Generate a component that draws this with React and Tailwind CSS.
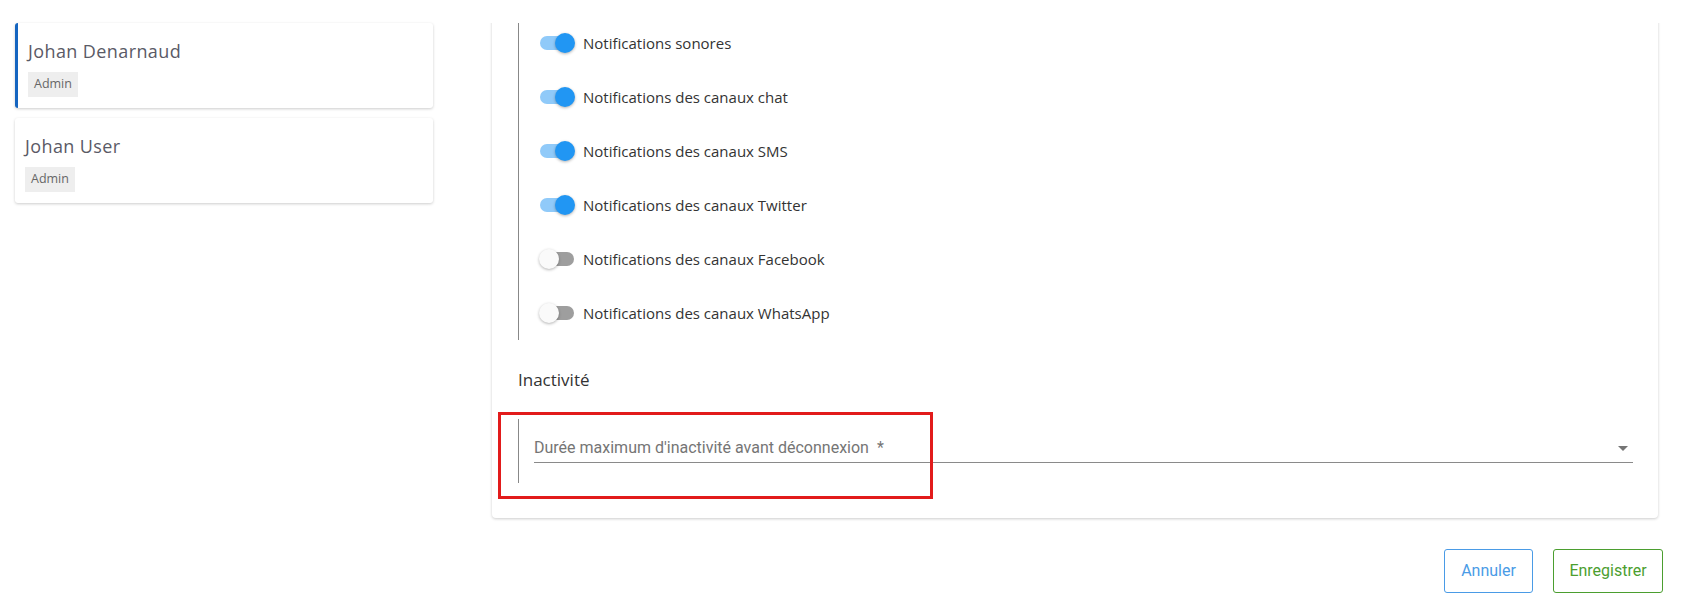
import { useState } from 'react';

const users = [
  { name: 'Johan Denarnaud', role: 'Admin', active: true },
  { name: 'Johan User', role: 'Admin', active: false },
];

const notifs = [
  { label: 'Notifications sonores', on: true },
  { label: 'Notifications des canaux chat', on: true },
  { label: 'Notifications des canaux SMS', on: true },
  { label: 'Notifications des canaux Twitter', on: true },
  { label: 'Notifications des canaux Facebook', on: false },
  { label: 'Notifications des canaux WhatsApp', on: false },
];

function Toggle({ on, onClick }) {
  return (
    <button onClick={onClick} className="relative w-[36px] h-[20px] flex items-center shrink-0">
      <span className={`w-[34px] h-[14px] rounded-full ml-[1px] ${on ? 'bg-[#90caf9]' : 'bg-[#9e9e9e]'}`}></span>
      <span
        className={`absolute top-0 w-[20px] h-[20px] rounded-full shadow-[0_1px_3px_rgba(0,0,0,0.3)] ${
          on ? 'left-[16px] bg-[#2196f3]' : 'left-0 bg-[#fafafa]'
        }`}
      ></span>
    </button>
  );
}

export default function App() {
  const [items, setItems] = useState(notifs);

  const flip = (i) => setItems(items.map((it, j) => (j === i ? { ...it, on: !it.on } : it)));

  return (
    <div className="w-[1707px] h-[602px] bg-white flex overflow-hidden font-['Open_Sans',sans-serif]">
      {/* user list */}
      <div className="w-[433px] shrink-0 pl-[15px] pt-[23px] flex flex-col gap-[10px]">
        {users.map((u) => (
          <div
            key={u.name}
            className={`h-[85px] bg-white rounded-[3px] shadow-[0_1px_3px_rgba(0,0,0,0.2)] flex flex-col pt-[16px] ${
              u.active ? 'border-l-[3px] border-[#1565c0] pl-[10px]' : 'pl-[10px]'
            }`}
          >
            <div className="text-[18px] leading-[24px] text-[#5a5a66] tracking-[0.4px]">{u.name}</div>
            <div className="mt-[9px] self-start bg-[#eeeeee] h-[25px] px-[6px] flex items-center text-[12.5px] text-[#666]">
              {u.role}
            </div>
          </div>
        ))}
      </div>

      {/* settings panel */}
      <div className="ml-[59px] w-[1166px] flex flex-col">
        <div className="mt-[23px] [clip-path:inset(0_-10px_-10px_-10px)]">
          <div className="-mt-[7px] bg-white rounded-[4px] shadow-[0_1px_3px_rgba(0,0,0,0.2)] pl-[26px] pr-[25px] pb-[35px]">
            <div className="border-l border-[#888] w-fit">
              {items.map((it, i) => (
                <div key={it.label} className="h-[54px] flex items-center pl-[20px]">
                  <Toggle on={it.on} onClick={() => flip(i)} />
                  <span className="ml-[8px] text-[15px] text-[#333]">{it.label}</span>
                </div>
              ))}
            </div>

            <div className="mt-[28px] text-[17px] leading-[24px] text-[#333]">Inactivité</div>

            <div className="relative mt-[27px] h-[64px] border-l border-[#888] pl-[15px]">
              <div className="absolute -top-[7px] -left-[21px] w-[435px] h-[87px] border-[3px] border-[#e21b1b] pointer-events-none"></div>
              <div className="pt-[19px]">
                <div className="h-[25px] border-b border-[#8a8a8a] flex items-start justify-between font-['Roboto',sans-serif]">
                  <span className="text-[16px] leading-[20px] text-[#757575]">
                    Durée maximum d'inactivité avant déconnexion&nbsp; *
                  </span>
                  <svg width="10" height="5" viewBox="0 0 10 5" className="mt-[8px] mr-[5px]">
                    <path d="M0 0 L10 0 L5 5 Z" fill="#757575" />
                  </svg>
                </div>
              </div>
            </div>
          </div>
        </div>

        <div className="mt-[31px] flex justify-end gap-[20px] font-['Roboto',sans-serif]">
          <button className="w-[89px] h-[44px] border border-[#4a9be6] rounded-[3px] text-[16px] text-[#4a9be6]">
            Annuler
          </button>
          <button className="w-[110px] h-[44px] border border-[#4b9e2f] rounded-[3px] text-[16px] text-[#4b9e2f] -mr-[5px]">
            Enregistrer
          </button>
        </div>
      </div>
    </div>
  );
}
